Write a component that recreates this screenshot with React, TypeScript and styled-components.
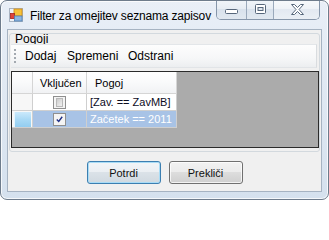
import React from 'react';
import styled, { createGlobalStyle } from 'styled-components';

const GlobalStyle = createGlobalStyle`
  html, body {
    margin: 0;
    padding: 0;
    background: #ffffff;
  }
  * {
    box-sizing: border-box;
  }
`;

const Window = styled.div`
  width: 329px;
  height: 200px;
  display: flex;
  flex-direction: column;
  border: 1px solid #6e7c8c;
  border-radius: 7px;
  overflow: hidden;
  background: linear-gradient(to bottom, #e9eff7 0%, #e1e9f3 40%, #d5e1ee 100%);
  box-shadow: inset 0 0 0 1px rgba(255, 255, 255, 0.75);
  font-family: 'Liberation Sans', Arial, sans-serif;
`;

const TitleBar = styled.div`
  height: 28px;
  flex: none;
  display: flex;
  align-items: center;
  padding: 0 8px;
`;

const Title = styled.span`
  flex: 1;
  min-width: 0;
  font-size: 12px;
  letter-spacing: -0.17px;
  color: #000;
  margin-left: 7px;
  margin-top: 1px;
  white-space: nowrap;
  overflow: hidden;
`;

const CaptionButtons = styled.div`
  flex: none;
  align-self: flex-start;
  display: flex;
  height: 20px;
  margin-top: -1px;
  border: 1px solid #8696aa;
  border-top: none;
  border-radius: 0 0 5px 5px;
  overflow: hidden;
`;

const CaptionButton = styled.div<{ $w: number; $light?: boolean }>`
  width: ${(p) => p.$w}px;
  height: 100%;
  display: flex;
  align-items: center;
  justify-content: center;
  border-left: 1px solid #9aa9bb;
  background: ${(p) =>
    p.$light
      ? 'linear-gradient(to bottom, #f8fafc 0%, #eef2f7 50%, #e3e9f1 50%, #eaeff5 100%)'
      : 'linear-gradient(to bottom, #f1f5f9 0%, #e6ecf3 50%, #d9e2ec 50%, #e1e8f0 100%)'};
  &:first-child {
    border-left: none;
  }
`;

const Frame = styled.div`
  flex: 1;
  display: flex;
  padding: 0 6px 7px 6px;
`;

const Client = styled.div`
  flex: 1;
  display: flex;
  flex-direction: column;
  background: #f0f0f0;
  border: 1px solid #a6b3c2;
`;

const GroupBox = styled.div`
  margin: 3px 1px 0 1px;
  border: 1px solid #d3d9de;
  border-radius: 3px;
  padding: 0 0 3px 0;
  display: flex;
  flex-direction: column;
`;

const GroupLabel = styled.div`
  height: 10px;
  line-height: 10px;
  font-size: 12px;
  padding-left: 5px;
  color: #000;
`;

const ToolStrip = styled.div`
  height: 24px;
  margin: 0 2px 0 1px;
  display: flex;
  align-items: center;
  padding-left: 3px;
  background: linear-gradient(to bottom, #fdfdfd 0%, #f6f7f8 60%, #eceef0 100%);
  border-top: 1px solid #e3e6e9;
  border-right: 1px solid #d9dcdf;
  border-bottom: 1px solid #e1e4e7;
`;

const Gripper = styled.div`
  width: 2px;
  height: 15px;
  margin-right: 4px;
  background: repeating-linear-gradient(
    to bottom,
    #a3a9b0 0 2px,
    transparent 2px 4px
  );
`;

const ToolItem = styled.div<{ $w: number }>`
  width: ${(p) => p.$w}px;
  font-size: 12px;
  color: #000;
  padding-left: 5px;
  white-space: nowrap;
`;

const Grid = styled.div`
  margin: 3px 0 0 1px;
  height: 77px;
  border: 1px solid #2b2b2b;
  background: #ababab;
  font-size: 11px;
  display: flex;
  flex-direction: column;
  align-items: flex-start;
`;

const Row = styled.div<{ $h: number }>`
  display: flex;
  height: ${(p) => p.$h}px;
  border-bottom: 1px solid #cfcfcf;
`;

const HeaderRow = styled(Row)`
  background: linear-gradient(to bottom, #ffffff 0%, #f9fafb 50%, #f1f2f4 100%);
  border-bottom-color: #d5d5d5;
`;

const HeaderCell = styled.div<{ $w: number; $pad?: number }>`
  width: ${(p) => p.$w}px;
  height: 100%;
  display: flex;
  align-items: center;
  padding-left: ${(p) => p.$pad ?? 0}px;
  border-right: 1px solid #d5d5d5;
  color: #000;
  white-space: nowrap;
`;

const RowHeader = styled.div<{ $selected?: boolean }>`
  width: 21px;
  height: 100%;
  border-right: 1px solid #cfcfcf;
  background: #f7f7f7;
  padding: 1px 1px 0 2px;
  &::after {
    content: '';
    display: ${(p) => (p.$selected ? 'block' : 'none')};
    height: 100%;
    background: linear-gradient(to bottom, #cbe9fb 0%, #a9d9f5 50%, #93cdf0 100%);
    border-left: 1px solid #e6f5fd;
  }
`;

const Cell = styled.div<{ $w: number; $selected?: boolean; $center?: boolean }>`
  width: ${(p) => p.$w}px;
  height: 100%;
  display: flex;
  align-items: center;
  justify-content: ${(p) => (p.$center ? 'center' : 'flex-start')};
  padding-left: ${(p) => (p.$center ? 0 : 3)}px;
  border-right: 1px solid #cfcfcf;
  background: ${(p) => (p.$selected ? '#a8c3e6' : '#ffffff')};
  color: ${(p) => (p.$selected ? '#ffffff' : '#0c0c1e')};
  white-space: nowrap;
`;

const CheckBox = styled.div<{ $checked?: boolean }>`
  width: 13px;
  height: 13px;
  border: 1px solid #8f8f8f;
  background: #f4f4f4;
  padding: 2px;
  display: flex;
  align-items: center;
  justify-content: center;
  &::before {
    content: '';
    display: ${(p) => (p.$checked ? 'none' : 'block')};
    width: 100%;
    height: 100%;
    background: linear-gradient(135deg, #cbcbcb 0%, #e3e3e3 60%, #f0f0f0 100%);
    border: 1px solid #b9b9b9;
  }
`;

const ButtonRow = styled.div`
  margin-top: 9px;
  display: flex;
  justify-content: center;
  gap: 8px;
`;

const Button = styled.div<{ $default?: boolean }>`
  width: 74px;
  height: 23px;
  display: flex;
  align-items: center;
  justify-content: center;
  font-size: 11px;
  color: #111;
  border-radius: 3px;
  border: 1px solid ${(p) => (p.$default ? '#3c7fb1' : '#707070')};
  background: ${(p) =>
    p.$default
      ? 'linear-gradient(to bottom, #f2f5f8 0%, #eaeef2 50%, #dbe2e8 50%, #d0d9e0 100%)'
      : 'linear-gradient(to bottom, #f2f2f2 0%, #ebebeb 50%, #dddddd 50%, #cfcfcf 100%)'};
  box-shadow: ${(p) =>
    p.$default
      ? 'inset 0 0 0 1px #a9dcf6'
      : 'inset 0 0 0 1px rgba(255, 255, 255, 0.75)'};
`;

function AppIcon() {
  return (
    <svg width="14" height="14" viewBox="0 0 14 14" style={{ flex: 'none' }}>
      <rect x="0.5" y="0.5" width="13" height="13" fill="#eef2f7" stroke="#a9b4c2" />
      <rect x="5" y="1" width="8" height="7" fill="#f6c23a" stroke="#d18b12" strokeWidth="0.8" />
      <rect x="1.5" y="5.5" width="4" height="5" fill="#e0443a" stroke="#a8231c" strokeWidth="0.8" />
      <rect x="5.5" y="8" width="7.5" height="5" fill="#8fb6e0" stroke="#4f7fb5" strokeWidth="0.8" />
    </svg>
  );
}

function MinGlyph() {
  return (
    <svg width="13" height="5" viewBox="0 0 13 5" style={{ marginTop: 4 }}>
      <rect x="0.5" y="0.5" width="12" height="4" rx="1" fill="#ffffff" stroke="#56667a" />
    </svg>
  );
}

function MaxGlyph() {
  return (
    <svg width="11" height="10" viewBox="0 0 11 10" style={{ marginTop: -2 }}>
      <rect x="0.5" y="0.5" width="10" height="9" rx="1" fill="#ffffff" stroke="#56667a" />
      <rect x="3" y="3.5" width="5" height="3" fill="#dfe6ee" stroke="#56667a" />
    </svg>
  );
}

function CloseGlyph() {
  return (
    <svg width="13" height="11" viewBox="0 0 13 11" style={{ marginTop: -1, marginLeft: 2 }}>
      <polygon
        points="0.5,0.5 3.5,0.5 6.5,3.5 9.5,0.5 12.5,0.5 8,5.5 12.5,10.5 9.5,10.5 6.5,7.5 3.5,10.5 0.5,10.5 5,5.5"
        fill="#ffffff"
        stroke="#56667a"
        strokeLinejoin="round"
      />
    </svg>
  );
}

function CheckMark() {
  return (
    <svg width="9" height="9" viewBox="0 0 9 9">
      <path d="M1 4.5 L3.5 7 L8 1" fill="none" stroke="#1f2f86" strokeWidth="1.8" />
    </svg>
  );
}

const tools = [
  { label: 'Dodaj', w: 42 },
  { label: 'Spremeni', w: 61 },
  { label: 'Odstrani', w: 60 },
];

const rows = [
  { on: false, text: '[Zav. == ZavMB]', selected: false },
  { on: true, text: 'Začetek == 2011', selected: true },
];

export default function App() {
  return (
    <>
      <GlobalStyle />
      <Window>
        <TitleBar>
          <AppIcon />
          <Title>Filter za omejitev seznama zapisov</Title>
          <CaptionButtons>
            <CaptionButton $w={29}>
              <MinGlyph />
            </CaptionButton>
            <CaptionButton $w={27}>
              <MaxGlyph />
            </CaptionButton>
            <CaptionButton $w={46} $light>
              <CloseGlyph />
            </CaptionButton>
          </CaptionButtons>
        </TitleBar>
        <Frame>
          <Client>
            <GroupBox>
              <GroupLabel>Pogoji</GroupLabel>
              <ToolStrip>
                <Gripper />
                {tools.map((t) => (
                  <ToolItem key={t.label} $w={t.w}>
                    {t.label}
                  </ToolItem>
                ))}
              </ToolStrip>
              <Grid>
                <HeaderRow $h={22}>
                  <HeaderCell $w={21} />
                  <HeaderCell $w={54} $pad={7}>
                    Vključen
                  </HeaderCell>
                  <HeaderCell $w={90} $pad={8}>
                    Pogoj
                  </HeaderCell>
                </HeaderRow>
                {rows.map((r) => (
                  <Row $h={17} key={r.text}>
                    <RowHeader $selected={r.selected} />
                    <Cell $w={54} $center $selected={r.selected}>
                      <CheckBox $checked={r.on}>{r.on && <CheckMark />}</CheckBox>
                    </Cell>
                    <Cell $w={90} $selected={r.selected}>
                      {r.text}
                    </Cell>
                  </Row>
                ))}
              </Grid>
            </GroupBox>
            <ButtonRow>
              <Button $default>Potrdi</Button>
              <Button>Prekliči</Button>
            </ButtonRow>
          </Client>
        </Frame>
      </Window>
    </>
  );
}
